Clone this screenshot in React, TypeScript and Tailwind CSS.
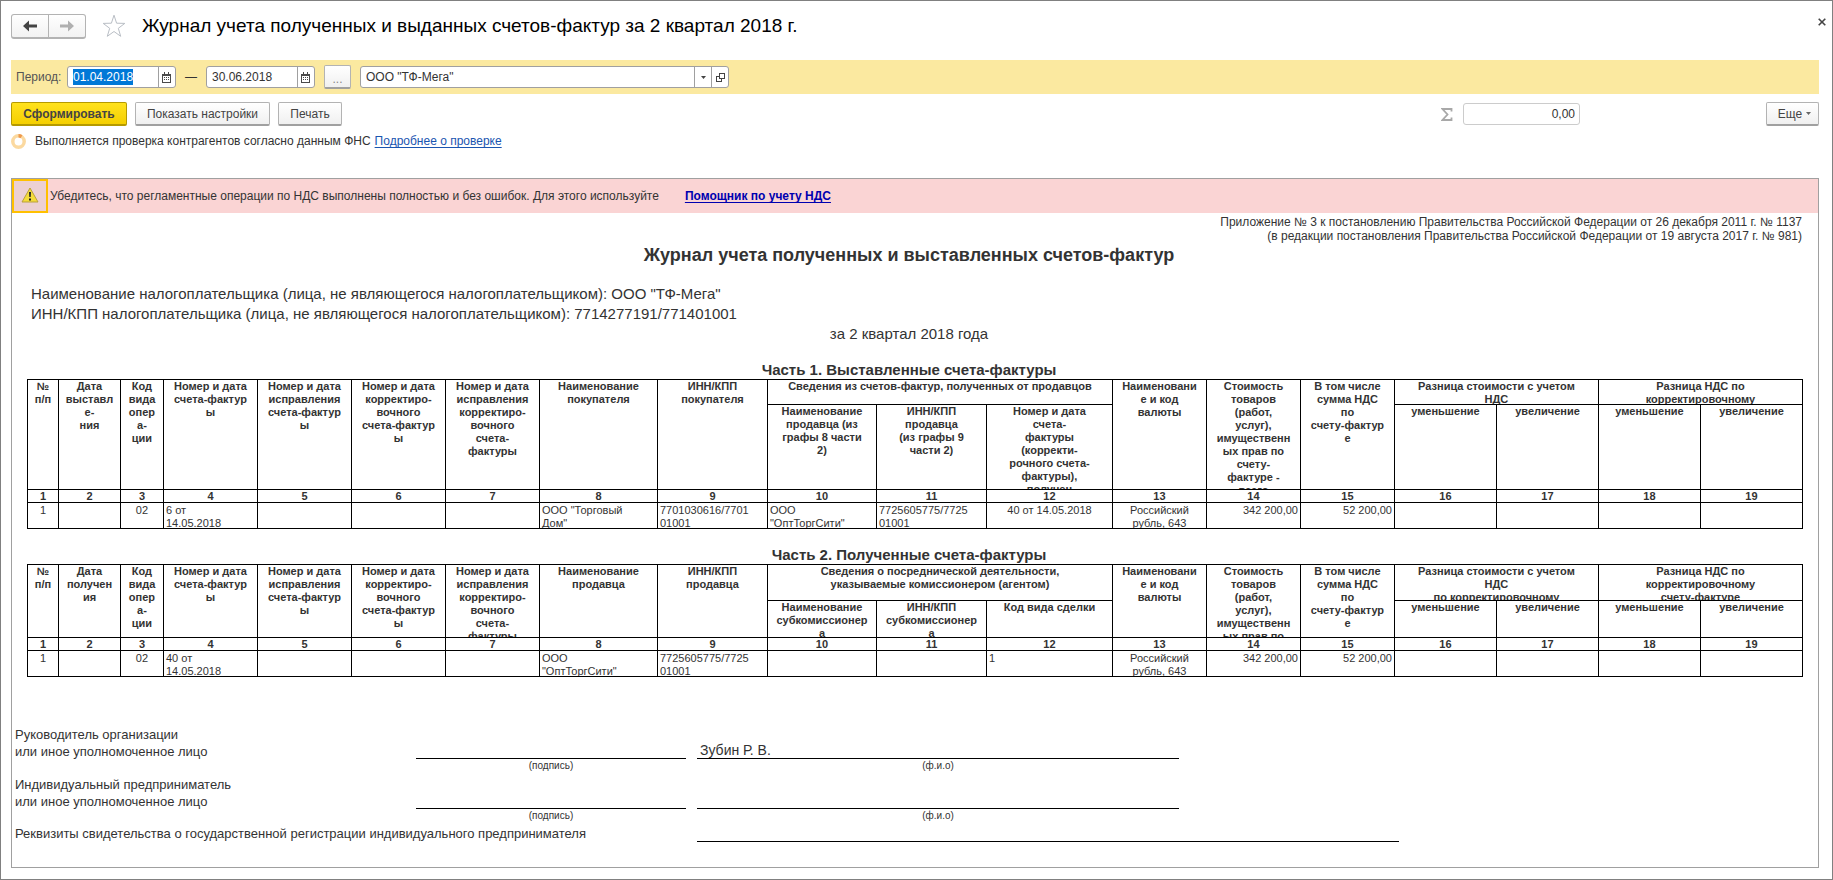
import { useEffect, useRef } from "react";
import type { ReactNode, Ref } from "react";

type Align = "left" | "center" | "right";

const COLUMN_WIDTHS = [31, 62, 43, 94, 94, 94, 94, 118, 110, 109, 110, 126, 94, 94, 94, 102, 102, 102, 102];
const TOTAL_WIDTH = COLUMN_WIDTHS.reduce((sum, w) => sum + w, 0);

const BUTTON =
  "flex h-6 items-center justify-center rounded-xs border border-[#b3b3b3] border-b-2 border-b-[#a0a0a0] bg-linear-to-b from-white to-[#f0f0f0] text-[#444]";

function CalendarIcon() {
  return (
    <svg width="10" height="11" viewBox="0 0 10 11" shapeRendering="crispEdges" aria-hidden="true">
      <path d="M0 2h1v9H0zM8 2h1v9H8zM0 10h9v1H0zM0 2h9v2H0z" fill="#4a4a4a" />
      <path d="M1 4h7v6H1z" fill="#fff" />
      <path d="M2 0h1v2H2zM6 0h1v2H6z" fill="#4a4a4a" />
      <path d="M2 5h1v1H2zM4 5h1v1H4zM6 5h1v1H6zM2 7h1v1H2zM4 7h1v1H4zM6 7h1v1H6z" fill="#4a4a4a" />
    </svg>
  );
}

function DateField({ label, value, inputRef }: { label: string; value: string; inputRef?: Ref<HTMLInputElement> }) {
  return (
    <div className="flex h-[22px] w-[109px] overflow-hidden rounded-[3px] border border-[#a0a0a0] bg-white">
      <input
        ref={inputRef}
        aria-label={label}
        defaultValue={value}
        className="w-full min-w-0 flex-1 pl-[5px] text-xs text-[#333] outline-none selection:bg-[#0078d7] selection:text-white"
      />
      <button type="button" aria-label="Календарь" className="flex w-[17px] items-center justify-center border-l border-[#a0a0a0]">
        <CalendarIcon />
      </button>
    </div>
  );
}

function Lines({ text }: { text: string }) {
  return (
    <>
      {text.split("|").map((line, i) => (
        <span key={i} className="block whitespace-nowrap">
          {line}
        </span>
      ))}
    </>
  );
}

function HeadCell({ text, height, rowSpan, colSpan }: { text: string; height: string; rowSpan?: number; colSpan?: number }) {
  return (
    <th rowSpan={rowSpan} colSpan={colSpan} className="border-t border-l border-black p-0 align-top font-bold">
      <div className={`overflow-hidden text-center ${height}`}>
        <Lines text={text} />
      </div>
    </th>
  );
}

interface Cell {
  text: string;
  align?: Align;
}

interface JournalProps {
  title: string;
  lead: string[];
  group: string;
  groupColumns: string[];
  currency: string[];
  costDiff: string;
  vatDiff: string;
  topHeight: string;
  subHeight: string;
  fullHeight: string;
  row: Cell[];
}

const ALIGN: Record<Align, string> = {
  left: "text-left pl-[2px]",
  center: "text-center",
  right: "text-right pr-[2px]",
};

function Journal(p: JournalProps) {
  return (
    <table className="w-full table-fixed border-separate border-spacing-0 border-r border-b border-black text-[11px] leading-[13px] text-[#333]">
      <caption className="h-[18px] pr-3 text-center text-[15px] leading-[18px] font-bold text-[#333]">{p.title}</caption>
      <colgroup>
        {COLUMN_WIDTHS.map((w, i) => (
          <col key={i} style={{ width: `${(w / TOTAL_WIDTH) * 100}%` }} />
        ))}
      </colgroup>
      <thead>
        <tr>
          {p.lead.map((text, i) => (
            <HeadCell key={i} text={text} height={p.fullHeight} rowSpan={2} />
          ))}
          <HeadCell text={p.group} height={p.topHeight} colSpan={3} />
          {p.currency.map((text, i) => (
            <HeadCell key={i} text={text} height={p.fullHeight} rowSpan={2} />
          ))}
          <HeadCell text={p.costDiff} height={p.topHeight} colSpan={2} />
          <HeadCell text={p.vatDiff} height={p.topHeight} colSpan={2} />
        </tr>
        <tr>
          {[...p.groupColumns, "уменьшение", "увеличение", "уменьшение", "увеличение"].map((text, i) => (
            <HeadCell key={i} text={text} height={p.subHeight} />
          ))}
        </tr>
        <tr>
          {COLUMN_WIDTHS.map((_, i) => (
            <th key={i} className="border-t border-l border-black p-0 text-center font-bold">
              <div className="h-3 leading-3">{i + 1}</div>
            </th>
          ))}
        </tr>
      </thead>
      <tbody>
        <tr>
          {p.row.map((cell, i) => (
            <td key={i} className="border-t border-l border-black p-0 align-top">
              <div className={`h-[25px] overflow-hidden pt-px ${ALIGN[cell.align ?? "left"]}`}>
                <Lines text={cell.text} />
              </div>
            </td>
          ))}
        </tr>
      </tbody>
    </table>
  );
}

const COMMON_LEAD = [
  "Код|вида|опер|а-|ции",
  "Номер и дата|счета-фактур|ы",
  "Номер и дата|исправления|счета-фактур|ы",
  "Номер и дата|корректиро-|вочного|счета-фактур|ы",
  "Номер и дата|исправления|корректиро-|вочного|счета-|фактуры",
];

const CURRENCY = [
  "Наименовани|е и код|валюты",
  "Стоимость|товаров|(работ,|услуг),|имущественн|ых прав по|счету-|фактуре -|всего",
  "В том числе|сумма НДС|по|счету-фактур|е",
];

const EMPTY: Cell = { text: "" };

const TOTALS: Cell[] = [
  { text: "Российский|рубль, 643", align: "center" },
  { text: "342 200,00", align: "right" },
  { text: "52 200,00", align: "right" },
  EMPTY,
  EMPTY,
  EMPTY,
  EMPTY,
];

const ISSUED: JournalProps = {
  title: "Часть 1. Выставленные счета-фактуры",
  lead: ["№|п/п", "Дата|выставл|е-|ния", ...COMMON_LEAD, "Наименование|покупателя", "ИНН/КПП|покупателя"],
  group: "Сведения из счетов-фактур, полученных от продавцов",
  groupColumns: [
    "Наименование|продавца (из|графы 8 части|2)",
    "ИНН/КПП|продавца|(из графы 9|части 2)",
    "Номер и дата|счета-|фактуры|(корректи-|рочного счета-|фактуры),|получен",
  ],
  currency: CURRENCY,
  costDiff: "Разница стоимости с учетом|НДС",
  vatDiff: "Разница НДС по|корректировочному",
  topHeight: "h-6",
  subHeight: "h-[84px]",
  fullHeight: "h-[109px]",
  row: [
    { text: "1", align: "center" },
    EMPTY,
    { text: "02", align: "center" },
    { text: "6 от|14.05.2018" },
    EMPTY,
    EMPTY,
    EMPTY,
    { text: 'ООО "Торговый|Дом"' },
    { text: "7701030616/7701|01001" },
    { text: 'ООО|"ОптТоргСити"' },
    { text: "7725605775/7725|01001" },
    { text: "40 от 14.05.2018", align: "center" },
    ...TOTALS,
  ],
};

const RECEIVED: JournalProps = {
  title: "Часть 2. Полученные счета-фактуры",
  lead: ["№|п/п", "Дата|получен|ия", ...COMMON_LEAD, "Наименование|продавца", "ИНН/КПП|продавца"],
  group: "Сведения о посреднической деятельности,|указываемые комиссионером (агентом)",
  groupColumns: ["Наименование|субкомиссионер|а", "ИНН/КПП|субкомиссионер|а", "Код вида сделки"],
  currency: CURRENCY,
  costDiff: "Разница стоимости с учетом|НДС|по корректировочному",
  vatDiff: "Разница НДС по|корректировочному|счету-фактуре",
  topHeight: "h-[35px]",
  subHeight: "h-9",
  fullHeight: "h-[72px]",
  row: [
    { text: "1", align: "center" },
    EMPTY,
    { text: "02", align: "center" },
    { text: "40 от|14.05.2018" },
    EMPTY,
    EMPTY,
    EMPTY,
    { text: 'ООО|"ОптТоргСити"' },
    { text: "7725605775/7725|01001" },
    EMPTY,
    EMPTY,
    { text: "1" },
    ...TOTALS,
  ],
};

function Signature({ who, name }: { who: ReactNode; name?: string }) {
  return (
    <div className="flex h-[50px] items-start">
      <div className="w-[401px] shrink-0 leading-[17px]">{who}</div>
      <div className="w-[270px] shrink-0 text-center">
        <div className="h-[33px] border-b border-black" />
        <div className="text-[10px] leading-[14px]">(подпись)</div>
      </div>
      <div className="ml-[11px] w-[482px] shrink-0 text-center">
        <div className="flex h-[33px] items-end border-b border-black pl-[3px] text-[14px] leading-[15px]">{name}</div>
        <div className="text-[10px] leading-[14px]">(ф.и.о)</div>
      </div>
    </div>
  );
}

function Header() {
  return (
    <header className="flex h-[50px] items-center pl-[10px]">
      <div className="flex h-[25px] w-[75px] rounded-[3px] border border-[#b3b3b3] border-b-2 bg-linear-to-b from-white to-[#f2f2f2]">
        <button type="button" aria-label="Назад" className="flex flex-1 items-center justify-center border-r border-[#b3b3b3]">
          <svg width="14" height="12" viewBox="0 0 14 12" aria-hidden="true">
            <path d="M0 6l6-5.500v4h8v3H6v4z" fill="#444" />
          </svg>
        </button>
        <button type="button" aria-label="Вперед" className="flex flex-1 items-center justify-center">
          <svg width="14" height="12" viewBox="0 0 14 12" aria-hidden="true">
            <path d="M14 6L8 .5v4H0v3h8v4z" fill="#b0b0b0" />
          </svg>
        </button>
      </div>
      <button type="button" aria-label="Избранное" className="ml-4">
        <svg width="24" height="24" viewBox="0 0 24 24" fill="#fff" stroke="#b9bec5" strokeWidth="1" aria-hidden="true">
          <path d="M12 1.200l2.600 8 8.200.2-6.500 4.900 2.400 8L12 17.500l-6.700 4.800 2.400-8L1.200 9.400l8.200-.2z" />
        </svg>
      </button>
      <h1 className="ml-4 text-[19px] leading-6 text-black">
        Журнал учета полученных и выданных счетов-фактур за 2 квартал 2018 г.
      </h1>
      <button type="button" aria-label="Закрыть" className="mr-[6px] mb-[9px] ml-auto">
        <svg width="8" height="8" viewBox="0 0 8 8" stroke="#444" strokeWidth="1.600" aria-hidden="true">
          <path d="M.7.7l6.600 6.600M7.300.7L.7 7.300" />
        </svg>
      </button>
    </header>
  );
}

export default function App() {
  const periodStart = useRef<HTMLInputElement>(null);

  useEffect(() => {
    periodStart.current?.focus();
    periodStart.current?.select();
  }, []);

  return (
    <div className="flex min-h-screen flex-col border border-[#808080] bg-white font-['Liberation_Sans',Arial,sans-serif] text-xs text-[#333]">
      <Header />

      <div className="mt-[9px] mr-[13px] ml-[10px] flex h-[34px] items-center bg-[#fbe9a0] pl-[5px]">
        <span className="w-[51px] text-[#555]">Период:</span>
        <DateField label="Начало периода" value="01.04.2018" inputRef={periodStart} />
        <span className="w-[30px] text-center">—</span>
        <DateField label="Конец периода" value="30.06.2018" />
        <button type="button" className={`${BUTTON} mx-[9px] w-[27px]`}>
          <span className="pt-1 text-[#888]">...</span>
        </button>
        <div className="flex h-[22px] w-[369px] overflow-hidden rounded-[3px] border border-[#a0a0a0] bg-white">
          <input aria-label="Организация" defaultValue={'ООО "ТФ-Мега"'} className="min-w-0 flex-1 pl-[5px] outline-none" />
          <button type="button" aria-label="Выбрать" className="flex w-[17px] items-center justify-center border-l border-[#a0a0a0]">
            <svg width="5" height="3" viewBox="0 0 5 3" aria-hidden="true">
              <path d="M0 0h5L2.500 3z" fill="#444" />
            </svg>
          </button>
          <button type="button" aria-label="Открыть" className="flex w-[17px] items-center justify-center border-l border-[#a0a0a0]">
            <svg width="9" height="9" viewBox="0 0 9 9" fill="none" stroke="#444" shapeRendering="crispEdges" aria-hidden="true">
              <path d="M3.500.5h5v5h-5zM3 3.500H.5v5h5V6" />
            </svg>
          </button>
        </div>
      </div>

      <div className="mt-2 mr-[13px] ml-[10px] flex h-6 items-center">
        <button
          type="button"
          className="h-6 w-[116px] rounded-xs border border-b-2 border-[#b59a00] bg-linear-to-b from-[#ffe21c] to-[#f5cf00] font-bold text-[#444]"
        >
          Сформировать
        </button>
        <button type="button" className={`${BUTTON} ml-2 w-[135px]`}>
          Показать настройки
        </button>
        <button type="button" className={`${BUTTON} ml-2 w-16`}>
          Печать
        </button>
        <label htmlFor="sum" className="mr-[10px] ml-auto">
          <svg width="12" height="13" viewBox="0 0 12 13" fill="none" stroke="#a8a8a8" aria-label="Сумма">
            <path d="M10.500 3.500V1H1.500l5 5.500L1.500 12h9V9.500" strokeWidth="1.800" />
          </svg>
        </label>
        <input
          id="sum"
          readOnly
          value="0,00"
          className="h-[22px] w-[117px] rounded-[3px] border border-[#ccc] pr-1 text-right text-[#333] outline-none"
        />
        <button type="button" className={`${BUTTON} ml-[186px] w-[53px] gap-1 pl-1`}>
          Еще
          <svg width="5" height="3" viewBox="0 0 5 3" aria-hidden="true">
            <path d="M0 0h5L2.500 3z" fill="#666" />
          </svg>
        </button>
      </div>

      <div className="mt-[7px] ml-[10px] flex h-4 items-center">
        <svg width="15" height="15" viewBox="0 0 15 15" fill="none" strokeWidth="3.500" aria-hidden="true">
          <circle cx="7.500" cy="7.500" r="5.700" stroke="#fbd9a0" />
          <path d="M7.500 1.800a5.700 5.700 0 0 1 3 .9" stroke="#ee9a4d" />
        </svg>
        <span className="ml-[9px]">Выполняется проверка контрагентов согласно данным ФНС</span>
        <a href="#check" className="ml-1 text-[#1a55b0] underline underline-offset-2">
          Подробнее о проверке
        </a>
      </div>

      <main className="mt-[29px] mr-[13px] mb-[11px] ml-[10px] flex-1 border border-[#a0a0a0]">
        <div className="flex h-[34px] items-center bg-[#fad4d4]">
          <div className="flex h-[34px] w-9 items-center justify-center border-2 border-[#ffc000] bg-[#ecd0d3] pb-[2px]">
            <svg width="18" height="16" viewBox="0 0 18 16" aria-hidden="true">
              <path d="M9 1l8 14H1z" fill="#f5dc3a" stroke="#b9a13c" strokeLinejoin="round" />
              <path d="M8 5h2l-.3 5H8.300zM8 11.500h2v2H8z" fill="#222" />
            </svg>
          </div>
          <span className="ml-[2px]">
            Убедитесь, что регламентные операции по НДС выполнены полностью и без ошибок. Для этого используйте
          </span>
          <a href="#assistant" className="ml-[26px] font-bold text-[#0000b0] underline underline-offset-2">
            Помощник по учету НДС
          </a>
        </div>

        <div className="px-[15px]">
          <p className="mt-[2px] pr-px text-right leading-[14px]">
            Приложение № 3 к постановлению Правительства Российской Федерации от 26 декабря 2011 г. № 1137
            <br />
            (в редакции постановления Правительства Российской Федерации от 19 августа 2017 г. № 981)
          </p>
          <h2 className="pr-3 text-center text-[18px] leading-6 font-bold">
            Журнал учета полученных и выставленных счетов-фактур
          </h2>
          <div className="mt-[17px] pl-1 text-[15px] leading-5">
            <p>Наименование налогоплательщика (лица, не являющегося налогоплательщиком): ООО "ТФ-Мега"</p>
            <p>ИНН/КПП налогоплательщика (лица, не являющегося налогоплательщиком): 7714277191/771401001</p>
          </div>
          <p className="mb-[17px] pr-3 text-center text-[15px] leading-5">за 2 квартал 2018 года</p>
          <Journal {...ISSUED} />
          <div className="h-[17px]" />
          <Journal {...RECEIVED} />
        </div>

        <div className="mt-[49px] pl-[3px] text-[13px]">
          <Signature
            who={
              <>
                Руководитель организации
                <br />
                или иное уполномоченное лицо
              </>
            }
            name="Зубин Р. В."
          />
          <Signature
            who={
              <>
                Индивидуальный предприниматель
                <br />
                или иное уполномоченное лицо
              </>
            }
          />
          <div className="flex h-4 items-start leading-4">
            <span className="w-[682px] shrink-0">
              Реквизиты свидетельства о государственной регистрации индивидуального предпринимателя
            </span>
            <span className="h-4 w-[702px] border-b border-black" />
          </div>
        </div>
      </main>
    </div>
  );
}
